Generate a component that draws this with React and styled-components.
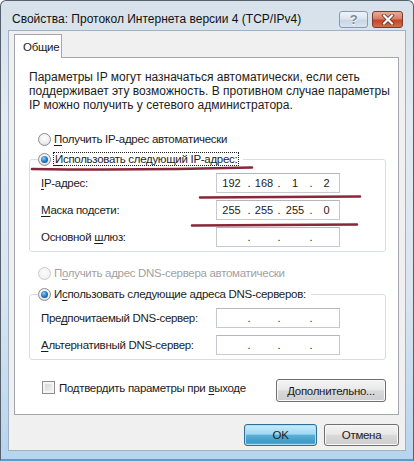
import React from 'react';
import styled, { createGlobalStyle, css } from 'styled-components';

const Global = createGlobalStyle`
  html, body { margin: 0; padding: 0; background: #fff; }
  body {
    font-family: "Liberation Sans", Arial, sans-serif;
    font-size: 11.5px;
    letter-spacing: -0.3px;
    color: #1c1c1c;
  }
  * { box-sizing: border-box; }
`;

const Window = styled.div`
  position: relative;
  width: 414px;
  height: 461px;
  display: flex;
  flex-direction: column;
  border: 1px solid #55606c;
  border-bottom: 2px solid #5e9bc6;
  border-radius: 6px 6px 0 0;
  background: linear-gradient(180deg, #d6e1eb 0%, #e3eaf1 25%, #d9e5f0 65%, #b7d4ee 100%);
  overflow: hidden;
`;

const TitleBar = styled.div`
  height: 29px;
  flex: none;
  display: flex;
  align-items: center;
  padding: 7px 10px 0 11px;
`;

const Title = styled.div`
  flex: 1;
  font-size: 12px;
  letter-spacing: 0;
  color: #111;
  white-space: nowrap;
`;

const CaptionButtons = styled.div`
  display: flex;
  gap: 4px;
`;

const CaptionButton = styled.div`
  height: 17px;
  border-radius: 3px;
  display: grid;
  place-items: center;
  ${(p) =>
    p.$close
      ? css`
          width: 31px;
          border: 1px solid #7b3a30;
          background: linear-gradient(180deg, #e9ab98 0%, #d97e66 45%, #c4452b 55%, #d46c4d 100%);
        `
      : css`
          width: 29px;
          border: 1px solid #8a9aae;
          background: linear-gradient(180deg, #eef3f8 0%, #dce6f0 45%, #c9d6e3 55%, #d8e3ee 100%);
          color: #7d8b9a;
          font-size: 13px;
          font-weight: bold;
          text-shadow: 0 1px 0 #fff;
        `}
`;

const Client = styled.div`
  margin: 0 7px;
  height: 421px;
  flex: none;
  display: flex;
  flex-direction: column;
  background: #f0f0f0;
  border: 1px solid #9fb1c4;
  padding: 3px 6px 4px 5px;
`;

const TabStrip = styled.div`
  display: flex;
  margin-bottom: -1px;
  position: relative;
  z-index: 1;
`;

const Tab = styled.div`
  height: 24px;
  width: 48px;
  padding: 0 0 0 8px;
  display: flex;
  align-items: center;
  background: #fff;
  border: 1px solid #a3a6ad;
  border-bottom: none;
  color: #1c1c1c;
`;

const Panel = styled.div`
  height: 358px;
  flex: none;
  background: #fff;
  border: 1px solid #a3a6ad;
  padding: 12px 12px 12px 14px;
  display: flex;
  flex-direction: column;
`;

const Intro = styled.p`
  margin: 0;
  font-size: 12px;
  letter-spacing: 0;
  line-height: 14px;
  white-space: nowrap;
`;

const OptionRow = styled.div`
  height: 16px;
  display: flex;
  align-items: center;
  gap: 3px;
  padding-left: 9px;
  margin-top: ${(p) => p.$top || 0}px;
  color: ${(p) => (p.$disabled ? '#a2a2a2' : '#1c1c1c')};
  white-space: nowrap;
`;

const RadioDot = styled.span`
  width: 13px;
  height: 13px;
  flex: none;
  border-radius: 50%;
  border: 1px solid ${(p) => (p.$disabled ? '#c9c9c9' : '#8b8d8f')};
  background: ${(p) =>
    p.$disabled
      ? 'radial-gradient(circle at 50% 40%, #fbfbfb 0%, #eeeeee 100%)'
      : 'radial-gradient(circle at 50% 35%, #ffffff 0%, #eeeeee 55%, #cfcfcf 100%)'};
  display: grid;
  place-items: center;
  &::after {
    content: '';
    width: 7px;
    height: 7px;
    border-radius: 50%;
    display: ${(p) => (p.$checked ? 'block' : 'none')};
    background: radial-gradient(circle at 40% 35%, #8fd0f8 0%, #2a7fcb 45%, #0c3b73 100%);
  }
`;

const Focus = styled.span`
  outline: 1px dotted #222;
  outline-offset: 0;
  padding: 0 1px;
`;

const Key = styled.span`
  text-decoration: underline;
  text-underline-offset: 2px;
`;

const Group = styled.fieldset`
  margin: ${(p) => p.$top || 0}px 0 0 0;
  padding: 6px 0 4px 11px;
  width: 357px;
  border: 1px solid #d5dfe5;
  border-radius: 3px;
  min-inline-size: 0;
`;

const Legend = styled.legend`
  margin-left: -3px;
  padding: 0 5px 0 0;
  height: 16px;
  display: flex;
  align-items: center;
  gap: 3px;
  white-space: nowrap;
  color: #1c1c1c;
`;

const Rows = styled.div`
  display: flex;
  flex-direction: column;
  gap: 7px;
`;

const FieldRow = styled.div`
  display: grid;
  grid-template-columns: 175px 124px;
  align-items: center;
  height: 20px;
  white-space: nowrap;
`;

const IpBox = styled.div`
  height: 20px;
  display: grid;
  grid-template-columns: 29px 6px 24px 6px 26px 6px 25px;
  align-items: center;
  background: #fff;
  border: 1px solid #c6cace;
  border-top-color: #b3b7bc;
  color: #1c1c1c;
  font-size: 11px;
  letter-spacing: 0;
`;

const Octet = styled.span`
  text-align: center;
`;

const Dot = styled.span`
  text-align: center;
`;

const BottomRow = styled.div`
  margin-top: 19px;
  display: flex;
  align-items: flex-start;
  justify-content: space-between;
  width: 357px;
  padding-left: 13px;
`;

const CheckLabel = styled.div`
  display: flex;
  align-items: center;
  gap: 4px;
  height: 15px;
  margin-top: 1px;
  white-space: nowrap;
`;

const CheckBox = styled.span`
  width: 13px;
  height: 13px;
  flex: none;
  border: 1px solid #8e8f8f;
  background: linear-gradient(135deg, #d0d0d0 0%, #e8e8e8 60%, #f6f6f6 100%);
  box-shadow: inset 0 0 0 2px #f4f4f4;
`;

const Button = styled.div`
  width: ${(p) => p.$w}px;
  height: ${(p) => p.$h || 22}px;
  border-radius: 3px;
  display: grid;
  place-items: center;
  color: #1c1c1c;
  white-space: nowrap;
  ${(p) =>
    p.$primary
      ? css`
          border: 1px solid #2d6f96;
          background: linear-gradient(180deg, #c9ecfb 0%, #9fd8f2 45%, #59afd6 52%, #3e9ac4 85%, #5fb2d8 100%);
          box-shadow: inset 0 0 0 1px #a9e0f7;
        `
      : css`
          border: 1px solid #6f6f6f;
          background: linear-gradient(180deg, #f4f4f4 0%, #e9e9e9 45%, #d9d9d9 52%, #cdcdcd 100%);
          box-shadow: inset 0 0 0 1px #fafafa;
        `}
`;

const Footer = styled.div`
  margin-top: 9px;
  display: flex;
  justify-content: flex-end;
  gap: 7px;
`;

const Marks = styled.svg`
  position: absolute;
  top: -1px;
  left: -1px;
  width: 414px;
  height: 461px;
  pointer-events: none;
`;

function Ip({ parts = ['', '', '', ''] }) {
  return (
    <IpBox>
      <Octet>{parts[0]}</Octet>
      <Dot>.</Dot>
      <Octet>{parts[1]}</Octet>
      <Dot>.</Dot>
      <Octet>{parts[2]}</Octet>
      <Dot>.</Dot>
      <Octet>{parts[3]}</Octet>
    </IpBox>
  );
}

export default function App() {
  return (
    <>
      <Global />
      <Window>
        <TitleBar>
          <Title>Свойства: Протокол Интернета версии 4 (TCP/IPv4)</Title>
          <CaptionButtons>
            <CaptionButton>?</CaptionButton>
            <CaptionButton $close>
              <svg width="14" height="11" viewBox="0 0 14 11">
                <path d="M3 1.5 L11 9.5 M11 1.5 L3 9.5" stroke="#5a2318" strokeWidth="3.6" strokeLinecap="square" />
                <path d="M3 1.5 L11 9.5 M11 1.5 L3 9.5" stroke="#ffffff" strokeWidth="2.2" strokeLinecap="square" />
              </svg>
            </CaptionButton>
          </CaptionButtons>
        </TitleBar>
        <Client>
          <TabStrip>
            <Tab>Общие</Tab>
          </TabStrip>
          <Panel>
            <Intro>
              Параметры IP могут назначаться автоматически, если сеть
              <br />
              поддерживает эту возможность. В противном случае параметры
              <br />
              IP можно получить у сетевого администратора.
            </Intro>
            <OptionRow $top={19}>
              <RadioDot />
              <span>
                <Key>П</Key>олучить IP-адрес автоматически
              </span>
            </OptionRow>
            <Group $top={4}>
              <Legend>
                <RadioDot $checked />
                <Focus>
                  <Key>И</Key>спользовать следующий IP-адрес:
                </Focus>
              </Legend>
              <Rows>
                <FieldRow>
                  <span>
                    <Key>I</Key>P-адрес:
                  </span>
                  <Ip parts={['192', '168', '1', '2']} />
                </FieldRow>
                <FieldRow>
                  <span>
                    <Key>М</Key>аска подсети:
                  </span>
                  <Ip parts={['255', '255', '255', '0']} />
                </FieldRow>
                <FieldRow>
                  <span>
                    Основной <Key>ш</Key>люз:
                  </span>
                  <Ip />
                </FieldRow>
              </Rows>
            </Group>
            <OptionRow $top={13} $disabled>
              <RadioDot $disabled />
              <span>
                П<Key>о</Key>лучить адрес DNS-сервера автоматически
              </span>
            </OptionRow>
            <Group $top={5}>
              <Legend>
                <RadioDot $checked />
                <span>
                  И<Key>с</Key>пользовать следующие адреса DNS-серверов:
                </span>
              </Legend>
              <Rows>
                <FieldRow>
                  <span>
                    Пре<Key>д</Key>почитаемый DNS-сервер:
                  </span>
                  <Ip />
                </FieldRow>
                <FieldRow>
                  <span>
                    <Key>А</Key>льтернативный DNS-сервер:
                  </span>
                  <Ip />
                </FieldRow>
              </Rows>
            </Group>
            <BottomRow>
              <CheckLabel>
                <CheckBox />
                <span>
                  Подтвердить параметры при <Key>в</Key>ыходе
                </span>
              </CheckLabel>
              <Button $w={110} $h={23}>
                <span>
                  <Key>Д</Key>ополнительно...
                </span>
              </Button>
            </BottomRow>
          </Panel>
          <Footer>
            <Button $w={73} $primary>
              OK
            </Button>
            <Button $w={75}>Отмена</Button>
          </Footer>
        </Client>
        <Marks viewBox="0 0 414 461">
          <path d="M32 169 Q140 170.5 252 167.5" stroke="#8a2639" strokeWidth="2.6" fill="none" strokeLinecap="round" />
          <path d="M200 197.5 Q280 197 360 196.5" stroke="#8a2639" strokeWidth="2.6" fill="none" strokeLinecap="round" />
          <path d="M192 225.5 Q275 225 357 224.5" stroke="#8a2639" strokeWidth="2.6" fill="none" strokeLinecap="round" />
        </Marks>
      </Window>
    </>
  );
}
